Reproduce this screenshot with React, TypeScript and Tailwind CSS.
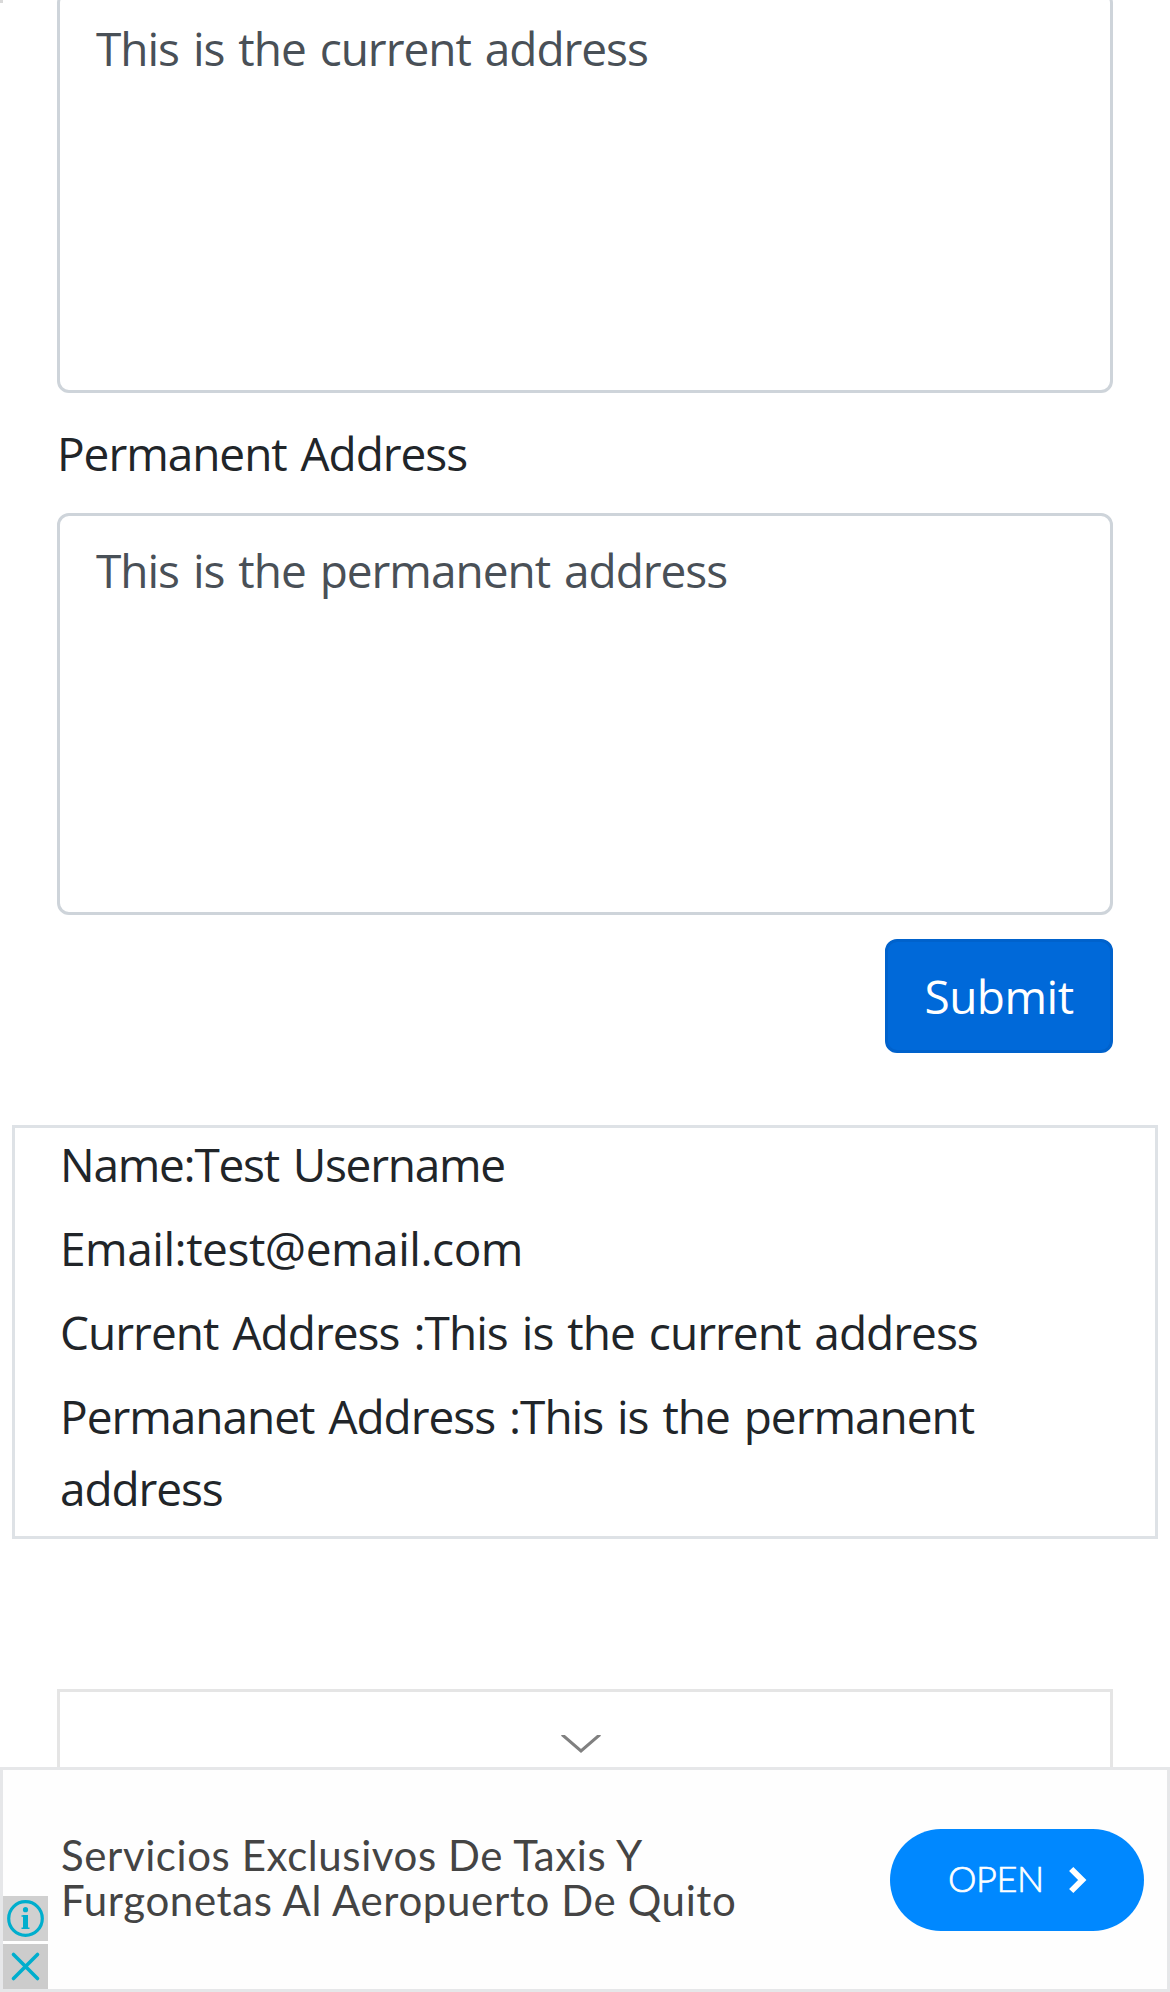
const areaClass =
  "block h-[402px] w-full resize-none overflow-hidden rounded-[12px] border-[3px] border-[#ced4da] bg-white px-[36px] py-[18px] text-[46px] leading-[72px] tracking-[-1.02px] [word-spacing:3px] text-[#495057] outline-none";

function AdBanner() {
  return (
    <section className="relative flex h-[225px] items-center justify-between border-[3px] border-[#e6e7e9] bg-[#fefefe] pl-[58px] pr-[23px] [word-spacing:0px]">
      <p className="pb-[4px] font-['Lato',sans-serif] text-[42px] leading-[45px] text-[#444444]">
        <span className="block whitespace-nowrap tracking-[0.6px]">Servicios Exclusivos De Taxis Y</span>
        <span className="block whitespace-nowrap tracking-[0.63px]">Furgonetas Al Aeropuerto De Quito</span>
      </p>
      <button className="flex h-[102px] w-[254px] items-center rounded-full bg-[#0088ff] pl-[58px] text-white">
        <span className="pb-[3px] font-['Lato',sans-serif] text-[36px] font-light leading-[40px] tracking-[-0.4px] [-webkit-text-stroke:0.7px_white]">
          OPEN
        </span>
        <svg className="ml-[25px] h-[28px] w-[20px]" viewBox="0 0 20 28" fill="none" stroke="currentColor" strokeWidth="6">
          <path d="M2.2 3 13.2 14 2.2 25" />
        </svg>
      </button>
      <div className="absolute bottom-0 left-0 flex flex-col gap-[3px]">
        <span className="flex size-[45px] items-center justify-center bg-[#d0d0d0] text-[#00aecd]">
          <svg className="size-[45px]" viewBox="0 0 45 45" fill="none" stroke="currentColor">
            <circle cx="22.5" cy="22.5" r="16.8" strokeWidth="3.2" />
            <circle cx="22.5" cy="13.7" r="2.6" fill="currentColor" stroke="none" />
            <path d="M22.5 19v14" strokeWidth="5" />
            <path d="M18.5 20h4M18.5 32.3h8" strokeWidth="1.6" />
          </svg>
        </span>
        <span className="flex size-[45px] items-center justify-center bg-[#cccccc] text-[#00aecd]">
          <svg className="size-[45px]" viewBox="0 0 45 45" fill="none" stroke="currentColor" strokeWidth="3.6" strokeLinecap="round">
            <path d="M10.5 10.5 34.5 34.5M34.5 10.5 10.5 34.5" />
          </svg>
        </span>
      </div>
    </section>
  );
}

export default function App() {
  return (
    <main className="relative flex h-[1992px] w-[1170px] flex-col overflow-hidden bg-white font-['Open_Sans',sans-serif] text-[46px] leading-[72px] text-[#212529] [word-spacing:3px]">
      <span className="absolute left-0 top-0 h-[3px] w-[3px] bg-[#d9d9d9]" />
      <form className="-mt-[9px] flex flex-col px-[57px]">
        <textarea className={areaClass} defaultValue="This is the current address" />
        <label className="mb-[24px] mt-[24px] tracking-[-1.05px]">Permanent Address</label>
        <textarea className={areaClass} defaultValue="This is the permanent address" />
        <button
          type="button"
          className="mt-[24px] flex h-[114px] w-[228px] items-center justify-center self-end rounded-[12px] border-[3px] border-[#0062cc] bg-[#0069d9] tracking-[-0.5px] text-white"
        >
          Submit
        </button>
      </form>

      <div className="mx-[12px] mt-[72px] flex flex-col gap-[12px] border-[3px] border-[#dee2e6] pb-[12px] pl-[45px] pr-[45px]">
        <p className="tracking-[-1.25px]">Name:Test Username</p>
        <p className="tracking-[-0.47px]">Email:test@email.com</p>
        <p className="whitespace-nowrap tracking-[-0.97px]">Current Address :This is the current address</p>
        <p className="tracking-[-1.02px]">
          Permananet Address :This is the permanent
          <span className="block tracking-[-1.1px]">address</span>
        </p>
      </div>

      <div className="mx-[57px] mt-[150px] flex h-[78px] justify-center border-[3px] border-b-0 border-[#e5e5e5] pt-[43px]">
        <svg className="ml-[-9px] h-[18px] w-[40px]" viewBox="0 0 40 18" fill="none" stroke="#808080" strokeWidth="3">
          <path d="M1-.5 20 16 39-.5" />
        </svg>
      </div>
      <AdBanner />
    </main>
  );
}
